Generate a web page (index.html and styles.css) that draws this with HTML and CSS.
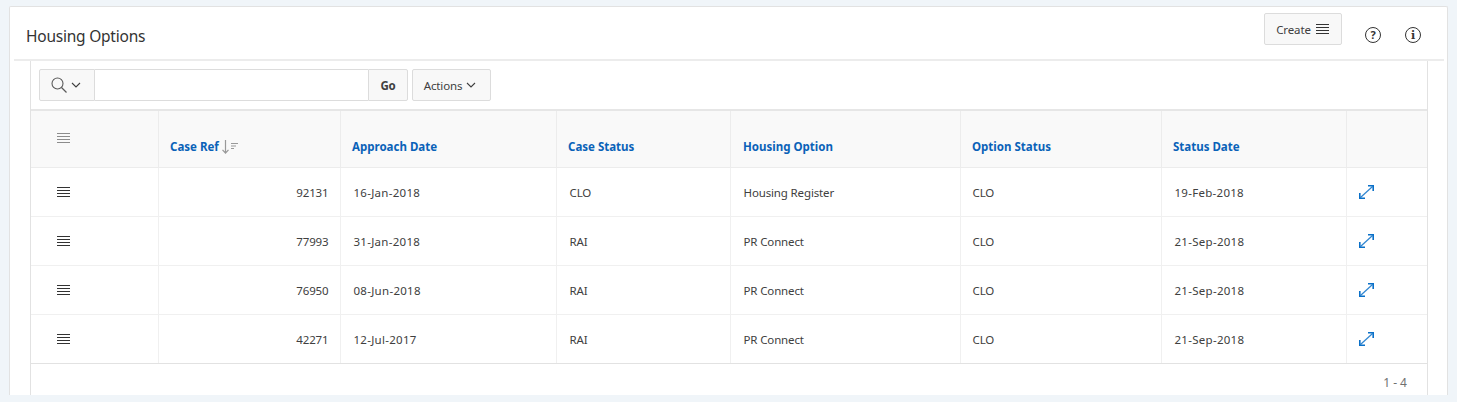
FILE: index.html
```html
<!DOCTYPE html>
<html>
<head>
<meta charset="UTF-8">
<title>Housing Options</title>
<link rel="stylesheet" href="styles.css">
</head>
<body>
<svg class="defs" width="0" height="0">
	<symbol id="i-menu" viewBox="0 0 13 10">
		<path d="M0 .5h13M0 3.5h13M0 6.5h13M0 9.5h13" fill="none" stroke="currentColor"/>
	</symbol>
	<symbol id="i-expand" viewBox="0 0 15 14">
		<path d="M1.500 12.500 13.500 1.500" fill="none" stroke="currentColor" stroke-width="1.200" stroke-opacity=".85"/>
		<path d="M9 .8H14.200V6M.8 8V13.200H6" fill="none" stroke="currentColor" stroke-width="1.600"/>
	</symbol>
</svg>

<div class="card">
	<div class="card-head">
		<h2 class="card-title">Housing Options</h2>
		<button class="btn btn-create">Create <svg class="icon-menu"><use href="#i-menu"/></svg></button>
		<svg class="icon-round" viewBox="0 0 16 16">
			<circle cx="8" cy="8" r="7.500" fill="none" stroke="currentColor"/>
			<text x="8" y="12" text-anchor="middle" class="icon-letter">?</text>
		</svg>
		<svg class="icon-round icon-info" viewBox="0 0 16 16">
			<circle cx="8" cy="8" r="7.500" fill="none" stroke="currentColor"/>
			<text x="8" y="12" text-anchor="middle" class="icon-letter icon-serif">i</text>
		</svg>
	</div>

	<div class="report">
		<div class="toolbar">
			<div class="search">
				<div class="search-btn">
					<svg class="icon-search" viewBox="0 0 16 16">
						<circle cx="6.500" cy="6.500" r="5.500" fill="none" stroke="#5a5a5a" stroke-width="1.100"/>
						<path d="M10.500 10.500 15.500 15.500" stroke="#5a5a5a" stroke-width="1.200"/>
					</svg>
					<svg class="icon-chev" viewBox="0 0 10 6"><path d="M1 1 5 5 9 1" fill="none" stroke="currentColor" stroke-width="1.100"/></svg>
				</div>
				<input class="search-input" type="text">
				<button class="btn btn-go">Go</button>
			</div>
			<button class="btn btn-actions">Actions <svg class="icon-chev" viewBox="0 0 10 6"><path d="M1 1 5 5 9 1" fill="none" stroke="currentColor" stroke-width="1.100"/></svg></button>
		</div>

		<table class="grid">
			<colgroup>
				<col class="c-link"><col class="c-ref"><col class="c-date"><col class="c-status"><col class="c-option"><col class="c-ostatus"><col class="c-sdate"><col class="c-edit">
			</colgroup>
			<thead>
				<tr>
					<th class="th-menu"><svg class="icon-menu"><use href="#i-menu"/></svg></th>
					<th>Case Ref
						<svg class="icon-sort" viewBox="0 0 16 14">
							<path d="M3.500 0V13M.5 9.800 3.500 13 6.500 9.800" fill="none" stroke="#999" stroke-width="1.200"/>
							<path d="M9 3.500h7M9 6h5M9 8.500h3" stroke="#999"/>
						</svg>
					</th>
					<th>Approach Date</th>
					<th>Case Status</th>
					<th class="th-option">Housing Option</th>
					<th>Option Status</th>
					<th>Status Date</th>
					<th></th>
				</tr>
			</thead>
			<tbody>
				<tr>
					<td class="td-menu"><svg class="icon-menu"><use href="#i-menu"/></svg></td>
					<td class="num">92131</td>
					<td class="date">16-Jan-2018</td>
					<td>CLO</td>
					<td>Housing Register</td>
					<td class="td-ostatus">CLO</td>
					<td class="date">19-Feb-2018</td>
					<td class="td-edit"><svg class="icon-expand"><use href="#i-expand"/></svg></td>
				</tr>
				<tr>
					<td class="td-menu"><svg class="icon-menu"><use href="#i-menu"/></svg></td>
					<td class="num">77993</td>
					<td class="date">31-Jan-2018</td>
					<td>RAI</td>
					<td>PR Connect</td>
					<td class="td-ostatus">CLO</td>
					<td class="date">21-Sep-2018</td>
					<td class="td-edit"><svg class="icon-expand"><use href="#i-expand"/></svg></td>
				</tr>
				<tr>
					<td class="td-menu"><svg class="icon-menu"><use href="#i-menu"/></svg></td>
					<td class="num">76950</td>
					<td class="date">08-Jun-2018</td>
					<td>RAI</td>
					<td>PR Connect</td>
					<td class="td-ostatus">CLO</td>
					<td class="date">21-Sep-2018</td>
					<td class="td-edit"><svg class="icon-expand"><use href="#i-expand"/></svg></td>
				</tr>
				<tr>
					<td class="td-menu"><svg class="icon-menu"><use href="#i-menu"/></svg></td>
					<td class="num">42271</td>
					<td class="date">12-Jul-2017</td>
					<td>RAI</td>
					<td>PR Connect</td>
					<td class="td-ostatus">CLO</td>
					<td class="date">21-Sep-2018</td>
					<td class="td-edit"><svg class="icon-expand"><use href="#i-expand"/></svg></td>
				</tr>
			</tbody>
		</table>

		<div class="pager">1 - 4</div>
	</div>
</div>
</body>
</html>
```

FILE: styles.css
```css
html, body {
	height: 402px;
	overflow: hidden;
}

body {
	margin: 0;
	padding: 6px 9px 0;
	box-sizing: border-box;
	background-color: #f0f5f9;
	font-family: "Noto Sans", Arial, sans-serif;
	font-size: 11.5px;
	letter-spacing: -0.14px;
	color: #404040;
}

.defs {
	position: absolute;
}

.card {
	width: 1439px;
	height: 389px;
	box-sizing: border-box;
	background-color: #fff;
	border: solid 1px #e2e2e2;
	border-bottom: none;
	border-radius: 2px 2px 0 0;
	overflow: hidden;
}

.card-head {
	display: flex;
	align-items: center;
	height: 52px;
	margin: 0 3px 0 4px;
	padding: 0 0 0 12px;
	border-bottom: solid 2px #ececec;
}

.card-title {
	flex: 1;
	margin: 5px 0 0;
	font-size: 15.5px;
	font-weight: normal;
	letter-spacing: -0.23px;
	color: #333;
}

.btn {
	font-family: inherit;
	font-size: 11.5px;
	letter-spacing: -0.14px;
	color: #404040;
	background-color: #f8f8f8;
	border: solid 1px #dcdcdc;
	border-radius: 2px;
	padding: 0;
	box-sizing: border-box;
}

.btn-create {
	display: flex;
	align-items: center;
	justify-content: center;
	gap: 5px;
	width: 78px;
	height: 32px;
	margin: -8px 0 0;
	padding-right: 1px;
}

.icon-menu {
	display: block;
	width: 13px;
	height: 10px;
	color: #333;
}

.icon-round {
	width: 16px;
	height: 16px;
	margin: 4px 0 0 23px;
	color: #333;
}

.icon-info {
	margin: 4px 23px 0 24px;
}

.icon-letter {
	font-size: 11px;
	font-weight: bold;
	fill: #333;
}

.icon-serif {
	font-family: "DejaVu Serif", serif;
}

.report {
	width: 1398px;
	margin-left: 20px;
	box-sizing: border-box;
	border-left: solid 1px #e2e2e2;
	border-right: solid 1px #e2e2e2;
	height: 340px;
}

.toolbar {
	display: flex;
	gap: 4px;
	height: 48px;
	padding: 8px 8px 0;
	box-sizing: border-box;
}

.search {
	display: flex;
	width: 369px;
	height: 32px;
}

.search-btn {
	display: flex;
	align-items: center;
	gap: 4px;
	width: 56px;
	box-sizing: border-box;
	padding-left: 11px;
	background-color: #f8f8f8;
	border: solid 1px #dcdcdc;
	border-radius: 2px 0 0 2px;
}

.icon-search {
	width: 16px;
	height: 16px;
}

.icon-chev {
	width: 10px;
	height: 6px;
	color: #404040;
}

.search-input {
	flex: 1;
	min-width: 0;
	height: 32px;
	box-sizing: border-box;
	border: solid 1px #dcdcdc;
	border-width: 1px 0;
	padding: 0;
	outline: none;
}

.btn-go {
	width: 40px;
	height: 32px;
	font-weight: bold;
	border-radius: 0 2px 2px 0;
}

.btn-actions {
	display: flex;
	align-items: center;
	justify-content: center;
	gap: 4px;
	width: 79px;
	height: 32px;
	padding-right: 3px;
}

.grid {
	width: 1396px;
	table-layout: fixed;
	border-collapse: collapse;
}

.c-link { width: 127px; }
.c-ref { width: 182px; }
.c-date { width: 216px; }
.c-status { width: 174px; }
.c-option { width: 230px; }
.c-ostatus { width: 201px; }
.c-sdate { width: 185px; }
.c-edit { width: 81px; }

.grid th {
	height: 57px;
	box-sizing: border-box;
	padding: 16px 11px 0 11.500px;
	background-color: #f9f9f9;
	border: solid 1px #ececec;
	border-top: solid 2px #e6e6e6;
	color: #0a62b8;
	font-weight: bold;
	letter-spacing: 0;
	text-align: left;
	white-space: nowrap;
}

.grid th.th-option {
	padding-left: 12.500px;
}

.grid td {
	height: 49px;
	box-sizing: border-box;
	padding: 1px 11px 0 13px;
	border: solid 1px #f0f0f0;
}

.grid td.td-ostatus {
	padding-left: 12px;
}

.grid th:first-child, .grid td:first-child {
	border-left: none;
}

.grid th:last-child, .grid td:last-child {
	border-right: none;
}

.grid th.th-menu {
	padding: 0 0 2px 26px;
	vertical-align: middle;
}

.th-menu .icon-menu {
	color: #8c8c8c;
}

.grid td.td-menu {
	padding: 0 0 0 26px;
}

.grid td.num {
	text-align: right;
}

.grid td.date {
	letter-spacing: 0.28px;
}

.grid td.td-edit {
	padding: 0 0 0 12px;
}

.icon-sort {
	width: 16px;
	height: 14px;
	vertical-align: -3px;
}

.icon-expand {
	display: block;
	width: 15px;
	height: 14px;
	color: #0a70c8;
}

.pager {
	margin-top: -1px;
	padding: 10px 20px 0 0;
	border-top: solid 1px #e2e2e2;
	font-size: 12px;
	letter-spacing: 0;
	text-align: right;
	color: #707070;
}
```
